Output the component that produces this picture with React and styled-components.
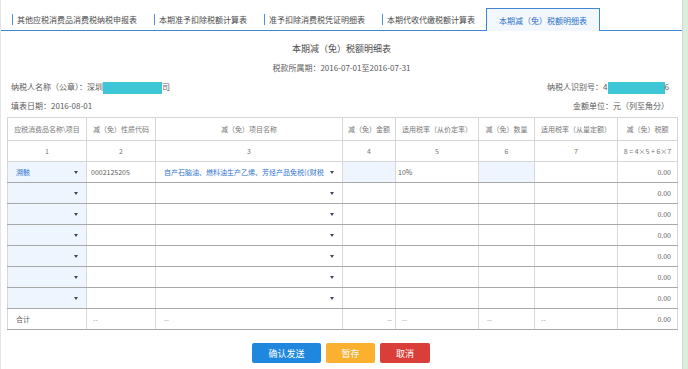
import React from "react";
import styled, { createGlobalStyle } from "styled-components";

const GlobalStyle = createGlobalStyle`
  html, body {
    margin: 0;
    padding: 0;
    background: #ffffff;
  }
  body {
    font-family: "Noto Sans CJK SC", "Liberation Sans", sans-serif;
  }
`;

const tabs = [
  "其他应税消费品消费税纳税申报表",
  "本期准予扣除税额计算表",
  "准予扣除消费税凭证明细表",
  "本期代收代缴税额计算表",
];

const columns = [
  { title: "应税消费品名称\\项目", no: "1", width: 79 },
  { title: "减（免）性质代码", no: "2", width: 69 },
  { title: "减（免）项目名称", no: "3", width: 187 },
  { title: "减（免）金额", no: "4", width: 53 },
  { title: "适用税率（从价定率）", no: "5", width: 83 },
  { title: "减（免）数量", no: "6", width: 56 },
  { title: "适用税率（从量定额）", no: "7", width: 83 },
  { title: "减（免）税额", no: "8 = 4×5 + 6×7", width: 60 },
];

const emptyRows = [1, 2, 3, 4, 5, 6];

const App = () => {
  return (
    <>
      <GlobalStyle />
      <Page>
        <Main>
          <TabBar>
            {tabs.map((t) => (
              <Tab key={t}>
                <Sep />
                {t}
              </Tab>
            ))}
            <ActiveTab>本期减（免）税额明细表</ActiveTab>
          </TabBar>

          <Title>本期减（免）税额明细表</Title>
          <Period>税款所属期：2016-07-01至2016-07-31</Period>

          <InfoRow>
            <span>
              纳税人名称（公章）：深圳<Mask $w={59} />司
            </span>
            <span>
              纳税人识别号：4<Mask $w={57} />6
            </span>
          </InfoRow>
          <InfoRow>
            <span>填表日期：2016-08-01</span>
            <span>金额单位：元（列至角分）</span>
          </InfoRow>

          <Table>
            <colgroup>
              {columns.map((c) => (
                <col key={c.no} style={{ width: c.width }} />
              ))}
            </colgroup>
            <thead>
              <HeadRow>
                {columns.map((c) => (
                  <HeadCell key={c.no}>{c.title}</HeadCell>
                ))}
              </HeadRow>
              <NumRow>
                {columns.map((c) => (
                  <HeadCell key={c.no}>{c.no}</HeadCell>
                ))}
              </NumRow>
            </thead>
            <tbody>
              <DataRow>
                <Cell $fill $soft $pad={8}>
                  <SelectBox>
                    <BlueText>溯骸</BlueText>
                    <Caret />
                  </SelectBox>
                </Cell>
                <Cell $soft $pad={4}>0002125205</Cell>
                <Cell $pad={8}>
                  <SelectBox>
                    <BlueText>自产石脑油、燃料油生产乙烯、芳烃产品免税(《财税</BlueText>
                    <Caret />
                  </SelectBox>
                </Cell>
                <Cell $fill />
                <Cell $pad={2}>10%</Cell>
                <Cell $fill $soft />
                <Cell $soft />
                <Cell $right $soft>0.00</Cell>
              </DataRow>
              {emptyRows.map((r) => (
                <DataRow key={r}>
                  <Cell $fill $soft $pad={8}>
                    <SelectBox>
                      <span />
                      <Caret />
                    </SelectBox>
                  </Cell>
                  <Cell $soft />
                  <Cell $pad={8}>
                    <SelectBox>
                      <span />
                      <Caret />
                    </SelectBox>
                  </Cell>
                  <Cell />
                  <Cell />
                  <Cell $soft />
                  <Cell $soft />
                  <Cell $right $soft>0.00</Cell>
                </DataRow>
              ))}
              <DataRow>
                <Cell $soft $pad={8}>合计</Cell>
                <Cell $soft $muted>--</Cell>
                <Cell $muted $pad={8}>--</Cell>
                <Cell $right $muted $pad={3}>--</Cell>
                <Cell $muted>--</Cell>
                <Cell $soft $muted $pad={8}>--</Cell>
                <Cell $soft $muted>--</Cell>
                <Cell $right $soft>0.00</Cell>
              </DataRow>
            </tbody>
          </Table>

          <Actions>
            <Button $bg="#1f88de" $w={69}>确认发送</Button>
            <Button $bg="#fbb02f" $w={49}>暂存</Button>
            <Button $bg="#d93f38" $w={50}>取消</Button>
          </Actions>
        </Main>
        <SideStrip />
      </Page>
    </>
  );
};

const Page = styled.div`
  display: flex;
  width: 688px;
  height: 369px;
  overflow: hidden;
`;

const Main = styled.div`
  width: 683px;
  border-left: 1px solid #e4e4e4;
  border-right: 1px solid #cfd8d2;
  background: #ffffff;
  box-sizing: border-box;
`;

const SideStrip = styled.div`
  flex: 1;
  background: #d9efdc;
`;

const TabBar = styled.div`
  display: flex;
  align-items: flex-end;
  height: 30px;
  padding-left: 5px;
  border-bottom: 1px solid #3f87d3;
`;

const Tab = styled.div`
  display: flex;
  align-items: center;
  height: 22px;
  padding: 0 11px 0 6px;
  font-size: 8px;
  color: #4a4a4a;
  white-space: nowrap;
`;

const Sep = styled.span`
  display: inline-block;
  width: 1px;
  height: 11px;
  background: #4f8fd2;
  margin-right: 4px;
`;

const ActiveTab = styled.div`
  display: flex;
  align-items: center;
  height: 22px;
  padding: 0 12px;
  margin-bottom: -1px;
  border: 1px solid #3f87d3;
  border-bottom: none;
  background: #f3f8fe;
  color: #2a6fc4;
  font-size: 8px;
  white-space: nowrap;
`;

const Title = styled.div`
  margin-top: 11px;
  text-align: center;
  font-size: 9px;
  line-height: 14px;
  color: #4a4a4a;
`;

const Period = styled.div`
  margin-top: 5px;
  text-align: center;
  font-size: 8px;
  line-height: 14px;
  color: #5a5a5a;
`;

const InfoRow = styled.div`
  display: flex;
  justify-content: space-between;
  align-items: center;
  padding: 0 13px 0 10px;
  margin-top: 5px;
  font-size: 8px;
  line-height: 14px;
  color: #5a5a5a;
`;

const Mask = styled.span`
  display: inline-block;
  width: ${(p) => p.$w}px;
  height: 12px;
  vertical-align: middle;
  background: #3ec5d6;
`;

const Table = styled.table`
  margin: 4px 0 0 6px;
  width: 670px;
  table-layout: fixed;
  border-collapse: collapse;
  border: 1px solid #cfcfcf;
  font-size: 7px;
  color: #5a5a5a;
`;

const HeadRow = styled.tr`
  height: 23px;
`;

const NumRow = styled.tr`
  height: 21px;
`;

const HeadCell = styled.th`
  border: 1px solid #d6d6d6;
  font-weight: normal;
  text-align: center;
  color: #777777;
  padding: 0 2px;
  white-space: nowrap;
  overflow: hidden;
`;

const DataRow = styled.tr`
  height: 21px;
`;

const Cell = styled.td`
  border-top: 1px solid #a8a8a8;
  border-bottom: 1px solid #a8a8a8;
  border-left: 1px solid ${(p) => (p.$soft ? "#d8d8d8" : "#9a9a9a")};
  border-right: 1px solid #d8d8d8;
  background: ${(p) => (p.$fill ? "#eef5fe" : "#ffffff")};
  text-align: ${(p) => (p.$right ? "right" : "left")};
  color: ${(p) => (p.$muted ? "#a0a0a0" : "#5a5a5a")};
  padding: 0 ${(p) => (p.$pad !== undefined ? p.$pad : 6)}px;
  white-space: nowrap;
  overflow: hidden;
`;

const SelectBox = styled.div`
  display: flex;
  align-items: center;
  justify-content: space-between;
  gap: 6px;
`;

const BlueText = styled.span`
  color: #2f73cf;
  overflow: hidden;
  white-space: nowrap;
`;

const Caret = styled.span`
  flex: none;
  width: 0;
  height: 0;
  border-left: 2px solid transparent;
  border-right: 2px solid transparent;
  border-top: 3px solid #3a4660;
`;

const Actions = styled.div`
  display: flex;
  justify-content: center;
  gap: 5px;
  margin-top: 13px;
  padding-right: 1px;
`;

const Button = styled.button`
  width: ${(p) => p.$w}px;
  height: 20px;
  border: none;
  border-radius: 2px;
  background: ${(p) => p.$bg};
  color: #ffffff;
  font-family: "Noto Sans CJK SC", "Liberation Sans", sans-serif;
  font-size: 9px;
  padding: 0;
  cursor: pointer;
`;

export default App;
